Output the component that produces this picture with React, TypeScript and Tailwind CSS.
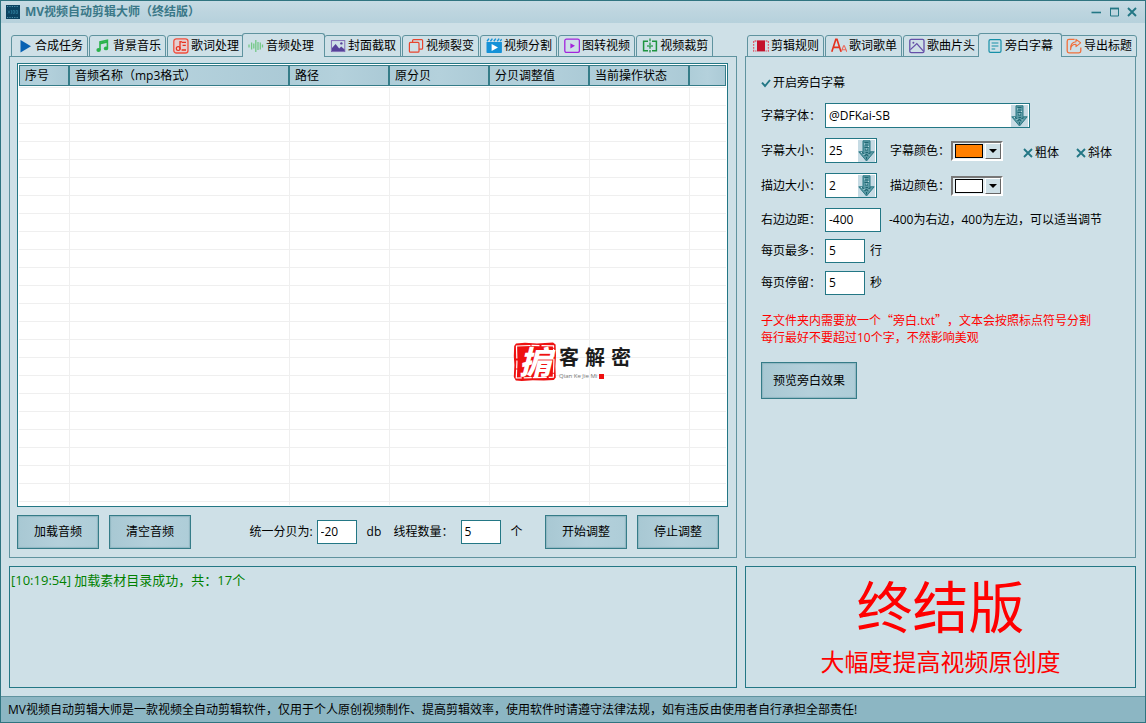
import { useState } from "react";
import type { ReactNode } from "react";

const FONT = "font-['Open_Sans','Noto_Sans_CJK_SC',sans-serif]";

/* ---------- icons ---------- */

function Icon({ children }: { children: ReactNode }) {
  return (
    <svg viewBox="0 0 16 16" className="size-4 shrink-0" fill="none" aria-hidden="true">
      {children}
    </svg>
  );
}

const PlayIcon = () => (
  <Icon>
    <path d="M3.5 2v12.4L14 8.2z" fill="#0862b3" />
  </Icon>
);

const NoteIcon = () => (
  <Icon>
    <path d="M5 12V4l7.4-1.8V10" stroke="#2bb24c" strokeWidth="1.6" />
    <path d="M5 4.6l7.4-1.9v2L5 6.600z" fill="#2bb24c" />
    <ellipse cx="3.6" cy="12" rx="2.2" ry="1.9" fill="#2bb24c" />
    <ellipse cx="11" cy="10.4" rx="2.2" ry="1.900" fill="#2bb24c" />
  </Icon>
);

const LyricIcon = () => (
  <Icon>
    <rect x="0.8" y="0.8" width="14.2" height="14.2" rx="2.6" fill="#e6cfd0" stroke="#f0503f" strokeWidth="1.3" />
    <path d="M7 11.4V3.6l2 .2M9 4.4h4M9.6 7.4h3.2M8.6 12h4.4" stroke="#e8321f" strokeWidth="1.3" />
    <circle cx="5.2" cy="10.6" r="1.9" stroke="#e8321f" strokeWidth="1.2" />
  </Icon>
);

const WaveIcon = () => (
  <Icon>
    <path d="M1 6.500v3M3.600 4.500v7M5.800 5.500v5M7.800 2v12M10 4v8M12.300 4.500v7M14.500 6.500v3" stroke="#74c886" strokeWidth="1.3" />
  </Icon>
);

const PhotoIcon = () => (
  <Icon>
    <rect x="1.4" y="2.6" width="13.4" height="11" stroke="#7a62b0" strokeWidth="0.9" />
    <path d="M2 13V10l3.6-4 3.6 4.6 2-2.2 3.4 3V13z" fill="#57429a" />
    <circle cx="11.4" cy="5.4" r="1.2" fill="#57429a" />
  </Icon>
);

const CopyIcon = () => (
  <Icon>
    <rect x="4.6" y="1.6" width="10" height="9.6" rx="1" stroke="#e8452f" strokeWidth="1.2" />
    <rect x="1.4" y="4.4" width="9.6" height="9.8" rx="1" fill="#cee0e7" stroke="#e8452f" strokeWidth="1.2" />
  </Icon>
);

const ClapIcon = () => (
  <Icon>
    <path d="M1 3.200l2-2.600M4.400 3.200l2-2.600M7.800 3.200l2-2.600M11.200 3.200l2-2.600M14.200 3.200l1.500-2" stroke="#1592d8" strokeWidth="1.4" />
    <path d="M0.500 4h15.400v10.200a.8.8 0 0 1-.8.8H1.300a.8.8 0 0 1-.8-.8z" fill="#1592d8" />
    <path d="M5.600 6v7l6.400-3.500z" fill="#fff" />
  </Icon>
);

const PlayBoxIcon = () => (
  <Icon>
    <rect x="0.8" y="1.2" width="14.6" height="13.2" rx="1.6" stroke="#a325dc" strokeWidth="1.3" />
    <path d="M6.4 5.2v5.2l4.6-2.6z" fill="#a325dc" />
  </Icon>
);

const CropIcon = () => (
  <Icon>
    <path d="M6 3.2H1.6v9.6H6M10 3.2h4.4v9.6H10" stroke="#1e9440" strokeWidth="1.5" />
    <path d="M8 0.6v15" stroke="#1e9440" strokeWidth="1.3" strokeDasharray="2.6 1.2" />
    <path d="M5 8h6" stroke="#1e9440" strokeWidth="1.2" />
  </Icon>
);

const FilmIcon = () => (
  <Icon>
    <rect x="4" y="2.4" width="8" height="11" fill="#c4122c" />
    <path d="M3.4 3H.6v10h2.8M12.600 3h2.800v10h-2.800" stroke="#dd6070" strokeWidth="1.3" strokeDasharray="1.8 1.1" />
  </Icon>
);

const LettersIcon = () => (
  <Icon>
    <path d="M.8 13.800L4.800 1.400h1.200l4 12.400M2.600 9.400h5.800" stroke="#e4321f" strokeWidth="1.6" />
    <path d="M10.200 13.800l2.400-6h.8l2.400 6M11 11.800h4" stroke="#ea6a5c" strokeWidth="1.1" />
  </Icon>
);

const PictureIcon = () => (
  <Icon>
    <rect x="0.8" y="1.4" width="14.2" height="13.2" rx="1.4" stroke="#6550a8" strokeWidth="1.3" />
    <path d="M1.400 11.600L7.800 5.600l6.800 7.800" stroke="#6550a8" strokeWidth="1.3" />
    <circle cx="4.4" cy="4.8" r="1" fill="#6550a8" />
  </Icon>
);

const DocIcon = () => (
  <Icon>
    <rect x="2" y="1.6" width="12" height="12.8" rx="1.4" stroke="#1690a8" strokeWidth="1.2" />
    <path d="M4.6 5h6.8M4.6 8h6.8M4.6 11h3.6" stroke="#1690a8" strokeWidth="1.2" />
  </Icon>
);

const ShareIcon = () => (
  <Icon>
    <path
      d="M8.6 1.400H3A1.800 1.800 0 0 0 1.200 3.200v9.800A1.800 1.800 0 0 0 3 14.800h10a1.800 1.800 0 0 0 1.800-1.800V9.400"
      stroke="#f0703c"
      strokeWidth="1.3"
    />
    <path
      d="M4.600 11.600c.2-3.600 2.200-5.400 5.400-5.400v2.400l4.600-3.800L10 1.400v2.400C6 4.200 4 7 4.600 11.600z"
      stroke="#f0703c"
      strokeWidth="1.1"
      strokeLinejoin="round"
    />
  </Icon>
);

/* Downward arrow used by the drop-down fields */
const DropArrow = () => (
  <svg
    viewBox="0 0 17 22"
    className="pointer-events-none absolute top-px right-px h-[22px] w-[17px] bg-[#c6dbe4]"
    aria-hidden="true"
  >
    <path d="M5 .800h7v11h4.200L8.500 21 .800 11.800H5z" fill="#5d9ba6" stroke="#2c7884" strokeWidth="1" />
    <path
      d="M6.500 2.500h4M7 5h3M6.500 7.500h4M7 10h3M4 12.500l2 1M7.500 12.500h2.500M12.500 12.500l-2 1.500M6.500 16l2-1.500 2 1.500M8.500 17v2.500"
      stroke="#1f6672"
      strokeWidth="1.1"
      fill="none"
    />
    <path d="M6 4h1M10 6.500h1M8 9h1M5.500 14.500h1M10.500 15h1M3 12.500h1" stroke="#bcd8de" strokeWidth="1" />
  </svg>
);

/* ---------- small parts ---------- */

type TabItem = { label: string; icon: ReactNode };

function TabStrip({
  items,
  active,
  activePad,
  label,
}: {
  items: TabItem[];
  active: number;
  activePad: string;
  label: string;
}) {
  return (
    <div role="tablist" aria-label={label} className="flex h-6 items-end gap-px pl-0.5">
      {items.map((t, i) => (
        <button
          key={t.label}
          type="button"
          role="tab"
          aria-selected={i === active}
          className={
            i === active
              ? `${activePad} relative z-10 -ml-[3px] flex h-6 shrink-0 items-center gap-0.5 rounded-t-[3px] border border-b-0 border-[#5f939f] bg-[#cee0e7] whitespace-nowrap`
              : "flex h-[22px] shrink-0 items-center gap-0.5 rounded-t-[3px] border border-[#5f939f] bg-[#cee0e7] pr-1 pl-[5px] whitespace-nowrap"
          }
        >
          {t.icon}
          {t.label}
        </button>
      ))}
    </div>
  );
}

function SkinButton({ children, size }: { children: ReactNode; size: string }) {
  return (
    <button
      type="button"
      className={`${size} shrink-0 border border-[#357c88] bg-linear-to-r from-[#a8c8d3] via-[#b4d0db] to-[#aecdd8] whitespace-nowrap shadow-[inset_1px_1px_1px_#8fb6c1,inset_-1px_-1px_1px_#8fb6c1]`}
    >
      {children}
    </button>
  );
}

function TextField({ id, value, size }: { id: string; value: string; size: string }) {
  return (
    <input
      id={id}
      type="text"
      defaultValue={value}
      className={`${size} h-6 shrink-0 border border-[#237785] bg-white px-[3px] pb-px outline-none`}
    />
  );
}

function DropField({ id, value, options, size }: { id: string; value: string; options: string[]; size: string }) {
  return (
    <span className={`${size} relative block h-[25px] shrink-0 border border-[#237785] bg-white`}>
      <select id={id} defaultValue={value} className="block h-[23px] w-full appearance-none bg-transparent px-[3px] outline-none">
        {options.map((o) => (
          <option key={o}>{o}</option>
        ))}
      </select>
      <DropArrow />
    </span>
  );
}

function ColorField({ id, swatch }: { id: string; swatch: string }) {
  return (
    <button
      id={id}
      type="button"
      className="flex h-5 w-[52px] shrink-0 items-center gap-0.5 border-2 border-t-[#777] border-r-white border-b-white border-l-[#777] bg-[#e4eef2] pl-0.5"
    >
      <span className={`${swatch} h-3.5 w-7 border border-black`} />
      <span className="flex h-4 w-4 items-center justify-center border border-t-white border-r-[#666] border-b-[#666] border-l-white bg-[#cee0e7]">
        <svg viewBox="0 0 8 4" className="h-1 w-2" aria-hidden="true">
          <path d="M0 0h8L4 4z" fill="#000" />
        </svg>
      </span>
    </button>
  );
}

function CheckField({ label, initial }: { label: string; initial: boolean }) {
  const [on, setOn] = useState(initial);
  return (
    <label className="relative flex h-4 items-center gap-0.5 whitespace-nowrap">
      <input
        type="checkbox"
        checked={on}
        onChange={(e) => setOn(e.target.checked)}
        className="absolute inset-0 appearance-none"
      />
      <svg viewBox="0 0 10 10" className="size-2.5" fill="none" stroke="#237785" strokeWidth="1.9" aria-hidden="true">
        {on ? <path d="M1 4.600L4 8l5-6" /> : <path d="M1 1l8 8M9 1L1 9" />}
      </svg>
      {label}
    </label>
  );
}

function Row({ id, label, className, children }: { id: string; label: string; className: string; children: ReactNode }) {
  return (
    <div className={`${className} flex items-center`}>
      <label htmlFor={id} className="w-16 shrink-0 whitespace-nowrap">
        {label}
      </label>
      {children}
    </div>
  );
}

/* ---------- data ---------- */

const leftTabs: TabItem[] = [
  { label: "合成任务", icon: <PlayIcon /> },
  { label: "背景音乐", icon: <NoteIcon /> },
  { label: "歌词处理", icon: <LyricIcon /> },
  { label: "音频处理", icon: <WaveIcon /> },
  { label: "封面截取", icon: <PhotoIcon /> },
  { label: "视频裂变", icon: <CopyIcon /> },
  { label: "视频分割", icon: <ClapIcon /> },
  { label: "图转视频", icon: <PlayBoxIcon /> },
  { label: "视频裁剪", icon: <CropIcon /> },
];

const rightTabs: TabItem[] = [
  { label: "剪辑规则", icon: <FilmIcon /> },
  { label: "歌词歌单", icon: <LettersIcon /> },
  { label: "歌曲片头", icon: <PictureIcon /> },
  { label: "旁白字幕", icon: <DocIcon /> },
  { label: "导出标题", icon: <ShareIcon /> },
];

const columns = [
  { label: "序号", width: "w-[50px]" },
  { label: "音频名称（mp3格式）", width: "w-[220px]" },
  { label: "路径", width: "w-[100px]" },
  { label: "原分贝", width: "w-[100px]" },
  { label: "分贝调整值", width: "w-[100px]" },
  { label: "当前操作状态", width: "w-[100px]" },
  { label: "", width: "w-auto" },
];

const emptyRows = Array.from({ length: 23 }, (_, i) => i);

/* ---------- sections ---------- */

function TitleBar() {
  return (
    <header className="flex h-[22px] items-center bg-linear-to-b from-[#c6dbe4] via-[#bdd5df] to-[#b6d1dc] pr-2 pl-[5px]">
      <svg viewBox="0 0 14 14" className="size-3.5 shrink-0" aria-hidden="true">
        <path d="M0 0h14v14H0z" fill="#0b4361" />
        <path d="M1 1.500h12M1 12.500h12" stroke="#4e93ad" strokeWidth="1" strokeDasharray="1.200 1.200" />
        <path d="M2 5.500l2 3M4 5.500l-2 3M5.500 5v4M7 5.500h1.500v3H7zM10 5.500h1.500v3H10z" stroke="#2d7c9c" strokeWidth=".7" fill="none" />
      </svg>
      <h1 className="ml-[5px] font-bold text-[#3a7888]">MV视频自动剪辑大师（终结版）</h1>
      <div className="ml-auto flex items-center gap-2">
        <button type="button" aria-label="最小化" className="size-2.5">
          <svg viewBox="0 0 10 10" className="size-2.5" aria-hidden="true">
            <path d="M.5 5.500H10" stroke="#237785" strokeWidth="1.600" />
          </svg>
        </button>
        <button type="button" aria-label="最大化" className="size-2.5">
          <svg viewBox="0 0 10 10" className="size-2.5" fill="none" stroke="#237785" aria-hidden="true">
            <path d="M1.500 1.500h8v7.500h-8z" />
            <path d="M1 1.500h9" strokeWidth="1.800" />
          </svg>
        </button>
        <button type="button" aria-label="关闭" className="size-2.5">
          <svg viewBox="0 0 10 10" className="size-2.5" fill="none" stroke="#237785" strokeWidth="1.900" aria-hidden="true">
            <path d="M1 1l8 8M9 1L1 9" />
          </svg>
        </button>
      </div>
    </header>
  );
}

function Brand() {
  return (
    <div className="pointer-events-none absolute top-[278px] left-[495px] flex gap-0.5">
      <div className="relative h-10 w-11">
        <svg viewBox="0 0 44 40" className="absolute inset-0 h-10 w-11" aria-hidden="true">
          <path d="M3 1.500l9-.7 12 .6L40 .500l2.600 2 .4 11-.6 11 .4 11-2 2.500-10 .6-11-.4-11 .8-6-.6L.800 35l.6-12L.800 14 1.200 4z" fill="#ee1111" />
          <path d="M3.500 4l16-.6 21 .4.4 15-.6 16.400-17 .4-20 .4.6-16z" fill="none" stroke="#fff" strokeWidth="1.2" strokeDasharray="14 1 8 2" />
        </svg>
        <span className="absolute inset-0 flex items-center justify-center text-[32px] leading-none font-black text-white italic">
          掮
        </span>
      </div>
      <div className="flex flex-col pt-0.5">
        <div className="flex gap-1.5 text-[20px] leading-7 font-bold text-[#1c1c1c]">
          <span>客</span>
          <span>解</span>
          <span>密</span>
        </div>
        <div className="flex items-center gap-0.5 text-[6px] leading-[8px] text-[#777]">
          Qian Ke Jie Mi
          <span className="size-[5px] bg-[#ee1111]" />
        </div>
      </div>
    </div>
  );
}

function AudioPanel() {
  return (
    <section className="flex min-w-0 flex-col">
      <TabStrip items={leftTabs} active={3} activePad="-mr-0.5 pl-[5px] pr-2.5" label="任务" />
      <div className="-mt-px flex flex-1 flex-col gap-2 border border-[#5f939f] pt-1.5 pr-2 pb-2 pl-[7px]">
        <div className="relative flex-1 overflow-hidden border border-[#237785] bg-white p-px">
          <table className="h-full w-full table-fixed border-separate border-spacing-0">
            <thead>
              <tr>
                {columns.map((c) => (
                  <th key={c.label} className={`${c.width} border-b border-[#efefef] p-0 pb-px text-left font-normal`}>
                    <div className="flex h-[21px] items-center border border-[#357c88] bg-linear-to-r from-[#aecdd8] via-[#b4d1dc] to-[#abcad6] pl-[5px] whitespace-nowrap">
                      {c.label}
                    </div>
                  </th>
                ))}
              </tr>
            </thead>
            <tbody>
              {emptyRows.map((r) => (
                <tr key={r} className="h-[18px]">
                  {columns.map((c, i) => (
                    <td
                      key={c.label}
                      className={i === 0 ? "border-b border-[#efefef] p-0" : "border-b border-l border-[#efefef] p-0"}
                    />
                  ))}
                </tr>
              ))}
              <tr className="h-auto">
                {columns.map((c, i) => (
                  <td key={c.label} className={i === 0 ? "p-0" : "border-l border-[#efefef] p-0"} />
                ))}
              </tr>
            </tbody>
          </table>
          <Brand />
        </div>
        <div className="flex items-center justify-between pr-[9px]">
          <div className="flex gap-2.5">
            <SkinButton size="h-[34px] w-[82px]">加载音频</SkinButton>
            <SkinButton size="h-[34px] w-[82px]">清空音频</SkinButton>
          </div>
          <div className="ml-9 flex items-center whitespace-nowrap">
            <label htmlFor="db">统一分贝为:</label>
            <span className="ml-1 flex items-center gap-2.5">
              <TextField id="db" value="-20" size="w-10" />
              <span className="w-[17px]">db</span>
              <label htmlFor="threads" className="w-[57px]">
                线程数量：
              </label>
              <TextField id="threads" value="5" size="w-10" />
              <span>个</span>
            </span>
          </div>
          <div className="flex gap-2.5">
            <SkinButton size="h-[34px] w-[82px]">开始调整</SkinButton>
            <SkinButton size="h-[34px] w-[82px]">停止调整</SkinButton>
          </div>
        </div>
      </div>
    </section>
  );
}

function SubtitlePanel() {
  return (
    <section className="flex min-w-0 flex-col">
      <TabStrip items={rightTabs} active={3} activePad="-mr-[3px] px-2" label="设置" />
      <div className="-mt-px flex flex-1 flex-col items-start border border-[#5f939f] pt-[18px] pr-2 pl-[15px]">
        <CheckField label="开启旁白字幕" initial={true} />
        <Row id="font" label="字幕字体：" className="mt-3">
          <DropField id="font" value="@DFKai-SB" options={["@DFKai-SB"]} size="w-[205px]" />
        </Row>
        <Row id="size" label="字幕大小：" className="mt-2.5">
          <DropField id="size" value="25" options={["25"]} size="w-[52px]" />
          <label htmlFor="color" className="ml-[13px] w-[61px] whitespace-nowrap">
            字幕颜色：
          </label>
          <ColorField id="color" swatch="bg-[#ff8000]" />
          <span className="ml-5 flex gap-[17px] pt-1">
            <CheckField label="粗体" initial={false} />
            <CheckField label="斜体" initial={false} />
          </span>
        </Row>
        <Row id="stroke" label="描边大小：" className="mt-2.5">
          <DropField id="stroke" value="2" options={["1", "2", "3"]} size="w-[52px]" />
          <label htmlFor="strokeColor" className="ml-[13px] w-[61px] whitespace-nowrap">
            描边颜色：
          </label>
          <ColorField id="strokeColor" swatch="bg-white" />
        </Row>
        <Row id="margin" label="右边边距：" className="mt-2.5">
          <TextField id="margin" value="-400" size="w-14" />
          <span className="ml-2">-400为右边，400为左边，可以适当调节</span>
        </Row>
        <Row id="lines" label="每页最多：" className="mt-[7px]">
          <TextField id="lines" value="5" size="w-10" />
          <span className="ml-[5px]">行</span>
        </Row>
        <Row id="stay" label="每页停留：" className="mt-2">
          <TextField id="stay" value="5" size="w-10" />
          <span className="ml-[5px]">秒</span>
        </Row>
        <p className="mt-4 mb-4 leading-[17px] text-[#ff0000] [text-spacing-trim:space-all]">
          子文件夹内需要放一个<span className="font-['Noto_Sans_CJK_SC',sans-serif]">“</span>旁白.txt
          <span className="font-['Noto_Sans_CJK_SC',sans-serif]">”</span>，文本会按照标点符号分割
          <br />
          每行最好不要超过10个字，不然影响美观
        </p>
        <SkinButton size="h-[37px] w-24">预览旁白效果</SkinButton>
      </div>
    </section>
  );
}

export default function App() {
  return (
    <div
      lang="zh-CN"
      className={`${FONT} flex min-h-screen flex-col border border-[#2f7480] bg-[#cee0e7] text-xs leading-4 text-black`}
    >
      <TitleBar />
      <main className="grid flex-1 grid-cols-[minmax(0,728fr)_minmax(0,391fr)] grid-rows-[1fr_auto] gap-2 pt-2.5 pr-[9px] pb-2 pl-2">
        <AudioPanel />
        <SubtitlePanel />
        <section aria-label="日志" className="min-h-[122px] border border-[#237785] p-px pt-1 text-[13px] leading-[18px] text-[#008000]">
          [10:19:54] 加载素材目录成功，共：17个
        </section>
        <section className="flex flex-col items-center border border-[#237785] pt-3 font-['Liberation_Sans','Noto_Sans_CJK_SC',sans-serif] text-[#ff0000]">
          <h2 className="text-[56px] leading-[60px]">终结版</h2>
          <p className="mt-2 text-2xl">大幅度提高视频原创度</p>
        </section>
      </main>
      <footer className="flex h-[26px] items-center border-t border-[#5f939f] bg-[#8cb6c3] px-[7px] whitespace-nowrap">
        MV视频自动剪辑大师是一款视频全自动剪辑软件，仅用于个人原创视频制作、提高剪辑效率，使用软件时请遵守法律法规，如有违反由使用者自行承担全部责任!
      </footer>
    </div>
  );
}
